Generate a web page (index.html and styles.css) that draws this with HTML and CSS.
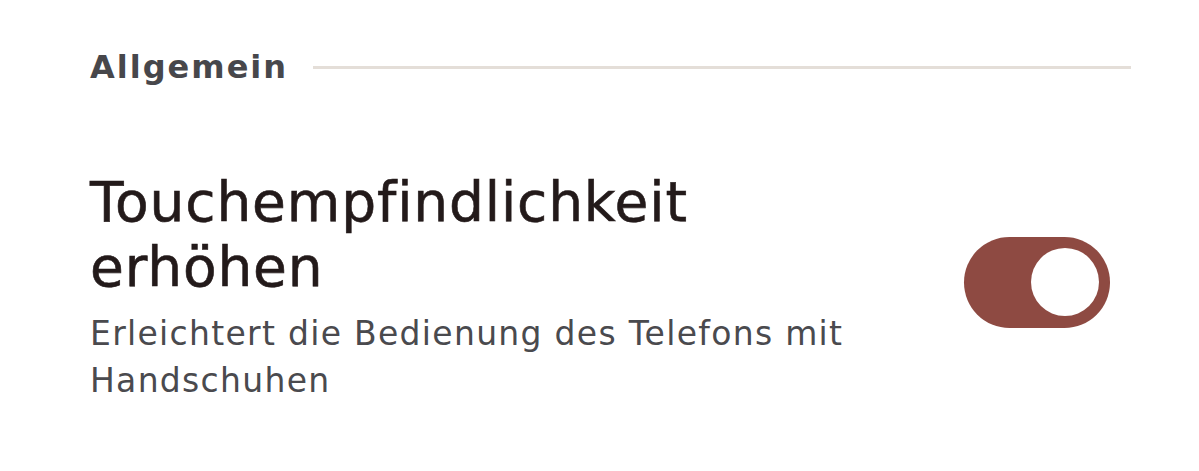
FILE: index.html
```html
<!DOCTYPE html>
<html lang="de">

<head>
    <meta charset="UTF-8">
    <meta name="viewport" content="width=device-width, initial-scale=1.0">
    <title>Einstellungen</title>
    <link rel="stylesheet" href="styles.css">
</head>

<body>

    <section class="group">
        <div class="group-header">
            <h2>Allgemein</h2>
            <span class="rule"></span>
        </div>

        <div class="setting">
            <div class="setting-text">
                <h3>Touchempfindlichkeit erhöhen</h3>
                <p>Erleichtert die Bedienung des Telefons mit Handschuhen</p>
            </div>
            <button class="switch on" role="switch" aria-checked="true">
                <span class="knob"></span>
            </button>
        </div>
    </section>

</body>

</html>
```

FILE: styles.css
```css
body {
    margin: 0;
    background: #ffffff;
    font-family: "DejaVu Sans", "Open Sans", sans-serif;
}

.group {
    padding: 44px 68px 0 90px;
}

.group-header {
    display: flex;
    align-items: center;
    gap: 25px;
}

.group-header h2 {
    margin: 0;
    font-size: 32px;
    font-weight: bold;
    letter-spacing: 2px;
    color: #47474b;
    line-height: 46px;
}

.rule {
    flex: 1;
    height: 3px;
    background: #e4ded8;
}

.setting {
    display: flex;
    align-items: center;
    padding-top: 80px;
    padding-right: 21px;
}

.setting-text {
    flex: 1;
    max-width: 790px;
}

.setting-text h3 {
    margin: 0;
    font-size: 55px;
    font-weight: normal;
    letter-spacing: 0.85px;
    line-height: 65px;
    color: #231a1a;
    -webkit-text-stroke: 0.6px #231a1a;
}

.setting-text p {
    margin: 10px 0 0;
    font-size: 33px;
    letter-spacing: 1.3px;
    line-height: 47px;
    color: #4a4a4e;
}

.switch {
    margin-left: auto;
    margin-bottom: 10px;
    width: 146px;
    height: 91px;
    padding: 0 11px;
    border: none;
    border-radius: 46px;
    background: #8e4a42;
    display: flex;
    align-items: center;
    justify-content: flex-end;
    cursor: pointer;
}

.knob {
    width: 68px;
    height: 68px;
    border-radius: 50%;
    background: #ffffff;
}
```
